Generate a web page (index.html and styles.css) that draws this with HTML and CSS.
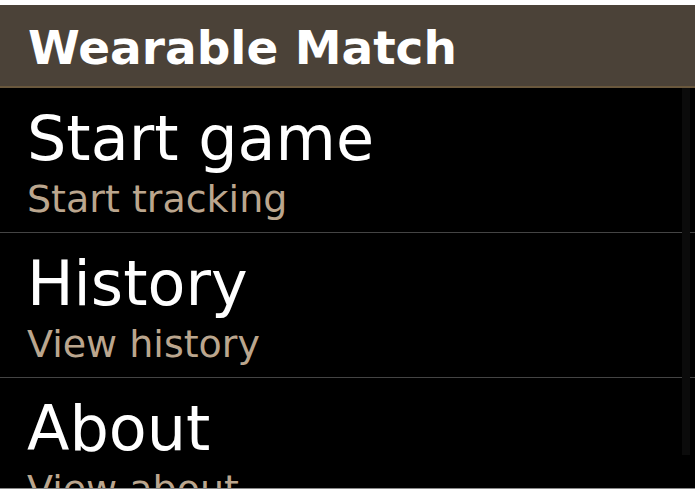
FILE: index.html
```html
<!DOCTYPE html>
<html>
<head>
    <meta charset="utf-8">
    <title>Wearable Match</title>
    <link rel="stylesheet" href="styles.css">
</head>
<body>
    <div class="screen">
        <div class="title-bar">Wearable Match</div>
        <div class="menu">
            <div class="menu-item">
                <div class="item-title">Start game</div>
                <div class="item-sub">Start tracking</div>
            </div>
            <div class="menu-item">
                <div class="item-title">History</div>
                <div class="item-sub">View history</div>
            </div>
            <div class="menu-item">
                <div class="item-title">About</div>
                <div class="item-sub">View about</div>
            </div>
            <div class="scroll-thumb"></div>
        </div>
    </div>
</body>
</html>
```

FILE: styles.css
```css
/* General */
body, html {
    margin: 0;
    padding: 0;
    background-color: #ffffff;
    font-family: 'DejaVu Sans', Verdana, sans-serif;
}
/* Screen */
.screen {
    margin-top: 5px;
    height: 483px;
    background-color: #000000;
    border-bottom: 1px solid #8a8a8a;
    overflow: hidden;
}
/* Title bar */
.title-bar {
    background-color: #4b4238;
    color: #ffffff;
    font-size: 47px;
    font-weight: bold;
    height: 83px;
    line-height: 86px;
    padding-left: 28px;
    border-bottom: 2px solid #6a583d;
    box-sizing: border-box;
}
/* Menu list */
.menu {
    background-color: #000000;
    position: relative;
}
.menu-item {
    height: 145px;
    padding-left: 27px;
    border-bottom: 1px solid #444444;
    box-sizing: border-box;
}
.item-title {
    color: #ffffff;
    font-size: 62px;
    line-height: 1;
    padding-top: 20px;
}
.item-sub {
    color: #bba68e;
    font-size: 38px;
    line-height: 1;
    padding-top: 10px;
}
/* Faint scroll indicator on the right edge */
.scroll-thumb {
    position: absolute;
    top: 0;
    right: 5px;
    width: 8px;
    height: 367px;
    background-color: #0b0b0b;
}
```
